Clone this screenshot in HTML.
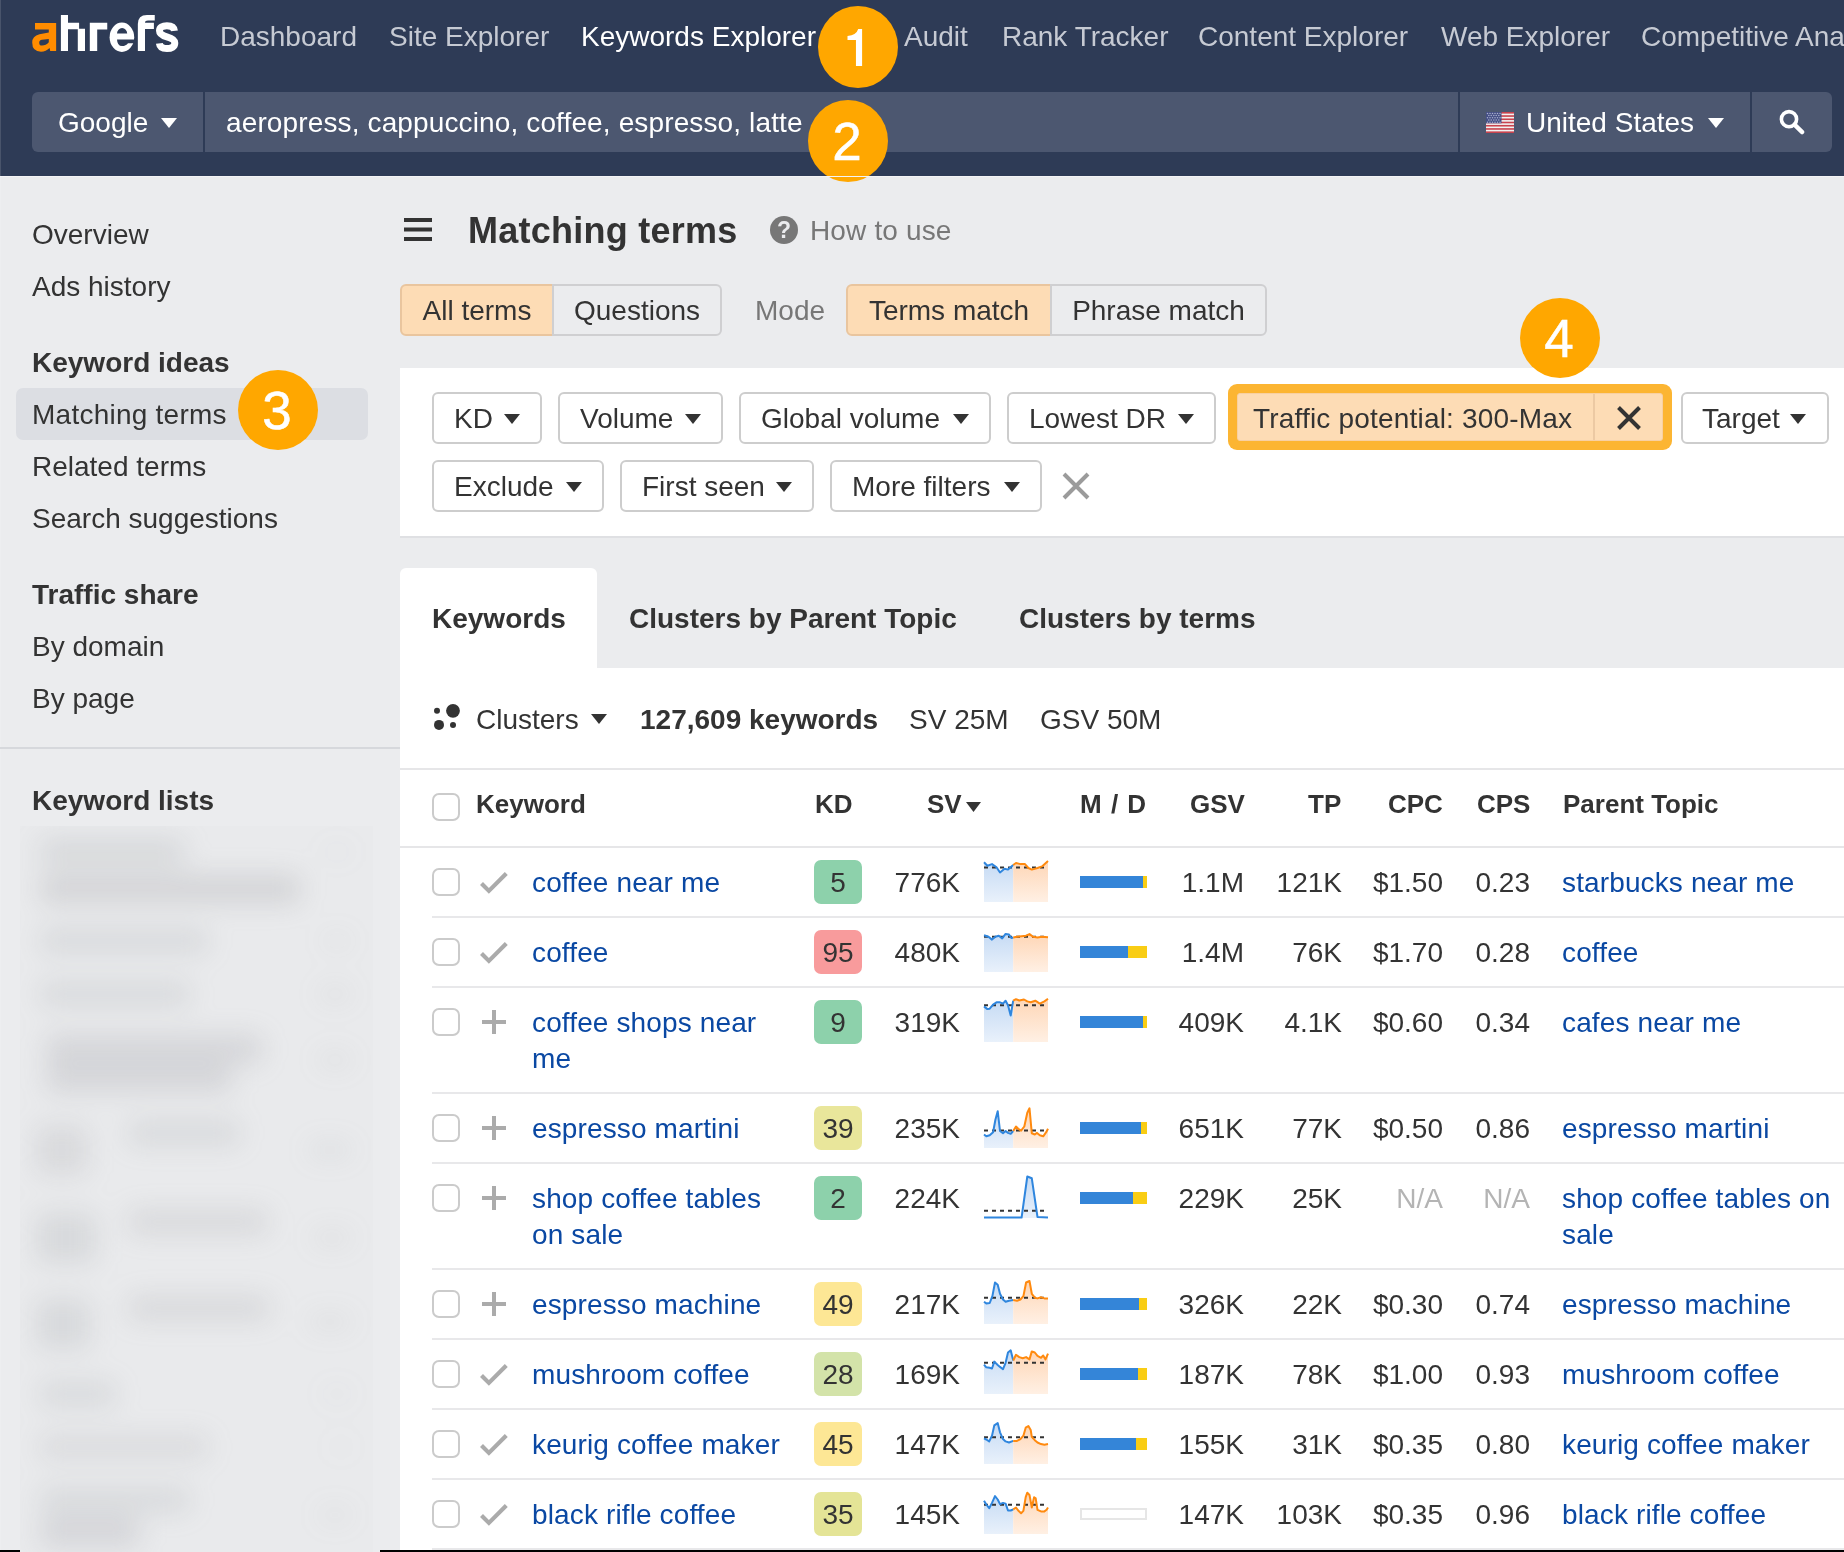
<!DOCTYPE html>
<html><head><meta charset="utf-8"><title>Keywords Explorer</title>
<style>
*{box-sizing:border-box;margin:0;padding:0}
html,body{width:1844px;height:1552px;overflow:hidden}
body{font-family:"Liberation Sans",sans-serif;font-size:28px;color:#333;background:#ebecee;position:relative}
.abs{position:absolute;white-space:nowrap}
#top{position:absolute;left:0;top:0;width:1844px;height:176px;background:#2e3b56}
.nav{position:absolute;top:19px;line-height:36px;color:#c6cad3;font-size:28px;white-space:nowrap}
.nav.on{color:#fff}
#sb{position:absolute;left:32px;top:92px;width:1800px;height:60px;border-radius:6px;background:#4c5770;overflow:hidden}
#sb .dv{position:absolute;top:0;width:2px;height:60px;background:#2e3b56}
#sb span{position:absolute;top:13px;line-height:36px;color:#fff;white-space:nowrap}
.tri{position:absolute;display:block;width:16px;height:10px;background:#fff;clip-path:polygon(0 0,100% 0,50% 100%)}
.tri.dk{background:#333}
.circ{position:absolute;width:80px;height:82px;border-radius:50%;background:#ffa700;color:#fff;font-size:53px;line-height:84px;text-align:center;padding-right:2px;-webkit-text-stroke:0.5px #fff}
.side{position:absolute;left:32px;line-height:36px;white-space:nowrap}
.side.b{font-weight:bold}
.btn{position:absolute;height:52px;line-height:50px;border:2px solid #cfcfd1;background:#ebecee;text-align:center;white-space:nowrap}
.btn.on{background:#fddcb5;border-color:#e9c59e}
.fb{position:absolute;height:52px;border:2px solid #cdcdcd;border-radius:6px;background:#fff;line-height:50px;padding-left:20px;white-space:nowrap}
.fb .tri{top:20px}
#panel{position:absolute;left:400px;top:668px;width:1444px;height:884px;background:#fff}
.th{position:absolute;top:786px;line-height:36px;font-size:26px;font-weight:bold;white-space:nowrap}
.cb{position:absolute;left:32px;top:20px;width:28px;height:28px;border:2px solid #cbcbcb;border-radius:7px;background:#fff}
#rows{position:absolute;left:400px;top:848px;width:1444px}
.row{position:relative;height:70px;margin-left:32px;border-bottom:2px solid #e8e8ea}
.row .cb{left:0}
.row.tall{height:106px}
.row .ic{position:absolute;left:46px;top:19px}
.kw,.pt{position:absolute;top:17px;line-height:36px;color:#0a48a3;white-space:nowrap;letter-spacing:0.13px}
.kw{left:100px}
.pt{left:1130px}
.kd{position:absolute;left:382px;top:12px;width:48px;height:44px;border-radius:7px;text-align:center;line-height:46px}
.num{position:absolute;top:17px;line-height:36px;text-align:right;white-space:nowrap}
.num.na{color:#b4b4b4}
.sv{right:884px}.gsv{right:600px}.tp{right:502px}.cpc{right:401px}.cps{right:314px}
.spark{position:absolute;left:552px;top:12px}
.md{position:absolute;left:648px;top:28px;width:67px;height:12px;display:block}
.md i{display:block;float:left;height:12px;background:#3485d8}
.md b{display:block;float:left;height:12px;background:#f9cd14}
.md.empty{border:2px solid #e6e6e6;background:#fff}
#blur{position:absolute;left:20px;top:826px;width:353px;height:726px;overflow:hidden;background:#e9eaec}
#blur .in{position:absolute;left:0;top:0;width:354px;height:760px;filter:blur(13px)}
#blur i{position:absolute;display:block;background:#8d8f94;border-radius:8px}
#wrap{position:absolute;left:0;top:0;width:1844px;height:1552px;will-change:transform;overflow:hidden}
</style></head><body><div id="wrap">
<svg width="0" height="0" style="position:absolute"><defs>
<linearGradient id="gb" x1="0" y1="0" x2="0" y2="1"><stop offset="0" stop-color="#c6dbf4"/><stop offset="1" stop-color="#e9f1fb"/></linearGradient>
<linearGradient id="go" x1="0" y1="0" x2="0" y2="1"><stop offset="0" stop-color="#fed6b6"/><stop offset="1" stop-color="#fff0e4"/></linearGradient>
</defs></svg>

<div id="top">
<svg class="abs" style="left:28px;top:8px" width="160" height="52" viewBox="28 8 160 52">
 <path fill="#ff8c00" fill-rule="evenodd" d="M56.15 23 H35 V29.4 H48.8 V32.6 L39.5 34.2 Q32.2 36 32.2 42.5 Q32.2 51.7 41 51.7 Q46 51.7 49.6 48 L50.2 51 H56.15 Z M48.8 38.9 L42 39.8 Q39.2 40.3 39.2 42.7 Q39.2 45.6 42 45.6 Q46 45.6 48.8 42.3 Z"/>
 <g fill="#fff">
 <path d="M60.9 14.9 H68 V22.85 H79.1 V28.7 H85 V51 H77.8 V29.2 H68 V51 H60.9 Z"/>
 <path d="M89.8 22.85 H107.25 V29.5 H97.2 V51 H89.8 Z"/>
 <ellipse cx="121.9" cy="37.25" rx="12.3" ry="14.65"/>
 <path fill="#2e3b56" d="M117 33.6 A5.1 5.5 0 0 1 127.2 33.6 Z M117 39.5 H136 V43.3 H128 Q126 46.1 122 46.1 Q117.3 46.1 117 39.5 Z"/>
 <path d="M137.85 51 V24 Q137.85 15 147 15 H154.75 V20.4 H148 Q145 20.4 145 22.8 H153.9 V29.1 H145 V51 Z"/>
 </g>
 <g fill="none" stroke="#fff">
 <path stroke-width="7" d="M174.4 30.9 C174 27 171 25.8 166.9 25.8 C162.5 25.8 159.5 27.5 159.5 30.8 C159.5 34.5 163 35.8 166.9 36.9 C171 38 174.8 39.3 174.8 43 C174.8 47 171.5 48.6 166.9 48.6 C162.5 48.6 159.8 47 159.4 43.4"/>
 </g>
</svg>
<span class="nav" style="left:220px">Dashboard</span>
<span class="nav" style="left:389px">Site Explorer</span>
<span class="nav on" style="left:581px">Keywords Explorer</span>
<span class="nav" style="left:904px">Audit</span>
<span class="nav" style="left:1002px">Rank Tracker</span>
<span class="nav" style="left:1198px">Content Explorer</span>
<span class="nav" style="left:1441px">Web Explorer</span>
<span class="nav" style="left:1641px">Competitive Analysis</span>
<div id="sb">
 <span style="left:26px">Google</span><i class="tri" style="left:129px;top:26px"></i>
 <i class="dv" style="left:171px"></i>
 <span style="left:194px;letter-spacing:0.13px">aeropress, cappuccino, coffee, espresso, latte</span>
 <i class="dv" style="left:1426px"></i>
 <svg class="abs" style="left:1454px;top:20px" width="28" height="21" viewBox="0 0 28 21"><rect width="28" height="21" fill="#f2f2f2"/><g fill="#c9434e"><rect y="0.000" width="28" height="1.615"/><rect y="3.231" width="28" height="1.615"/><rect y="6.462" width="28" height="1.615"/><rect y="9.692" width="28" height="1.615"/><rect y="12.923" width="28" height="1.615"/><rect y="16.154" width="28" height="1.615"/><rect y="19.385" width="28" height="1.615"/></g><rect width="15.5" height="11.3" fill="#454f85"/><g fill="#aab0cf"><circle cx="1.5" cy="1.4" r="0.75"/><circle cx="4.0" cy="1.4" r="0.75"/><circle cx="6.5" cy="1.4" r="0.75"/><circle cx="9.0" cy="1.4" r="0.75"/><circle cx="11.5" cy="1.4" r="0.75"/><circle cx="14.0" cy="1.4" r="0.75"/><circle cx="2.8" cy="3.6" r="0.75"/><circle cx="5.2" cy="3.6" r="0.75"/><circle cx="7.8" cy="3.6" r="0.75"/><circle cx="10.2" cy="3.6" r="0.75"/><circle cx="12.8" cy="3.6" r="0.75"/><circle cx="1.5" cy="5.8" r="0.75"/><circle cx="4.0" cy="5.8" r="0.75"/><circle cx="6.5" cy="5.8" r="0.75"/><circle cx="9.0" cy="5.8" r="0.75"/><circle cx="11.5" cy="5.8" r="0.75"/><circle cx="14.0" cy="5.8" r="0.75"/><circle cx="2.8" cy="8.0" r="0.75"/><circle cx="5.2" cy="8.0" r="0.75"/><circle cx="7.8" cy="8.0" r="0.75"/><circle cx="10.2" cy="8.0" r="0.75"/><circle cx="12.8" cy="8.0" r="0.75"/><circle cx="1.5" cy="10.2" r="0.75"/><circle cx="4.0" cy="10.2" r="0.75"/><circle cx="6.5" cy="10.2" r="0.75"/><circle cx="9.0" cy="10.2" r="0.75"/><circle cx="11.5" cy="10.2" r="0.75"/><circle cx="14.0" cy="10.2" r="0.75"/></g></svg>
 <span style="left:1494px">United States</span><i class="tri" style="left:1676px;top:26px"></i>
 <i class="dv" style="left:1718px"></i>
 <svg class="abs" style="left:1746px;top:16px" width="30" height="30" viewBox="0 0 30 30"><circle cx="11" cy="11.2" r="7.6" fill="none" stroke="#fff" stroke-width="3.6"/><path d="M16.5 16.7 L24.2 24.1" stroke="#fff" stroke-width="4.4" stroke-linecap="round"/></svg>
</div>
</div>
<div class="circ" style="left:818px;top:6px"><svg width="80" height="82" viewBox="0 0 80 82" style="position:absolute;left:0;top:0"><path fill="#fff" d="M44.1 22.95 H40.2 Q38.5 29 29.5 30.1 V34 H37.95 V60 H44.1 Z"/></svg></div>
<div class="circ" style="left:808px;top:100px">2</div>

<div class="abs" style="left:0;top:176px;width:1844px;height:1px;background:#f4f4f6"></div>
<div class="abs" style="left:0;top:0;width:1px;height:1552px;background:rgba(255,255,255,.13)"></div>
<!-- sidebar -->
<span class="side" style="top:217px">Overview</span>
<span class="side" style="top:269px">Ads history</span>
<span class="side b" style="top:345px">Keyword ideas</span>
<div class="abs" style="left:16px;top:388px;width:352px;height:52px;border-radius:7px;background:#dcdee3"></div>
<span class="side" style="top:397px;letter-spacing:0.24px">Matching terms</span>
<span class="side" style="top:449px">Related terms</span>
<span class="side" style="top:501px">Search suggestions</span>
<span class="side b" style="top:577px">Traffic share</span>
<span class="side" style="top:629px">By domain</span>
<span class="side" style="top:681px">By page</span>
<div class="abs" style="left:0;top:747px;width:400px;height:2px;background:#d6d8dc"></div>
<span class="side b" style="top:783px">Keyword lists</span>
<div id="blur"><div class="in"><i style="left:20px;top:13px;width:145px;height:26px;opacity:0.20"></i><i style="left:20px;top:49px;width:260px;height:28px;opacity:0.24"></i><i style="left:302px;top:20px;width:30px;height:12px;opacity:0.05"></i><i style="left:20px;top:103px;width:168px;height:24px;opacity:0.18"></i><i style="left:302px;top:108px;width:30px;height:14px;opacity:0.07"></i><i style="left:20px;top:156px;width:150px;height:24px;opacity:0.18"></i><i style="left:298px;top:160px;width:34px;height:16px;opacity:0.09"></i><i style="left:26px;top:209px;width:216px;height:28px;opacity:0.22"></i><i style="left:26px;top:238px;width:186px;height:28px;opacity:0.22"></i><i style="left:298px;top:226px;width:34px;height:16px;opacity:0.09"></i><i style="left:108px;top:295px;width:112px;height:24px;opacity:0.18"></i><i style="left:16px;top:299px;width:52px;height:50px;opacity:0.17"></i><i style="left:288px;top:316px;width:44px;height:16px;opacity:0.10"></i><i style="left:108px;top:384px;width:140px;height:24px;opacity:0.19"></i><i style="left:16px;top:387px;width:60px;height:50px;opacity:0.18"></i><i style="left:292px;top:404px;width:40px;height:16px;opacity:0.09"></i><i style="left:108px;top:470px;width:142px;height:24px;opacity:0.19"></i><i style="left:16px;top:473px;width:54px;height:50px;opacity:0.18"></i><i style="left:288px;top:488px;width:44px;height:16px;opacity:0.09"></i><i style="left:20px;top:556px;width:76px;height:24px;opacity:0.18"></i><i style="left:302px;top:561px;width:30px;height:14px;opacity:0.05"></i><i style="left:20px;top:609px;width:168px;height:24px;opacity:0.16"></i><i style="left:310px;top:614px;width:22px;height:14px;opacity:0.04"></i><i style="left:20px;top:662px;width:150px;height:24px;opacity:0.18"></i><i style="left:20px;top:691px;width:100px;height:30px;opacity:0.22"></i><i style="left:298px;top:681px;width:34px;height:16px;opacity:0.07"></i></div></div>
<div class="circ" style="left:238px;top:370px;height:80px;line-height:82px">3</div>

<!-- heading -->
<svg class="abs" style="left:404px;top:218px" width="28" height="24" viewBox="0 0 28 24"><path d="M0 2H28M0 11.5H28M0 21H28" stroke="#333" stroke-width="4"/></svg>
<span class="abs" style="left:468px;top:207px;font-size:36px;font-weight:bold;line-height:48px;letter-spacing:0.25px">Matching terms</span>
<svg class="abs" style="left:770px;top:216px" width="28" height="28" viewBox="0 0 28 28"><circle cx="14" cy="14" r="14" fill="#777"/><text x="14" y="22" font-family="Liberation Sans" font-weight="bold" font-size="23" fill="#ebecee" text-anchor="middle">?</text></svg>
<span class="abs" style="left:810px;top:213px;line-height:36px;color:#777;letter-spacing:0.15px">How to use</span>

<div class="btn on" style="left:400px;top:284px;width:154px;border-radius:6px 0 0 6px">All terms</div>
<div class="btn" style="left:552px;top:284px;width:170px;border-radius:0 6px 6px 0">Questions</div>
<span class="abs" style="left:755px;top:293px;line-height:36px;color:#777">Mode</span>
<div class="btn on" style="left:846px;top:284px;width:206px;border-radius:6px 0 0 6px">Terms match</div>
<div class="btn" style="left:1050px;top:284px;width:217px;border-radius:0 6px 6px 0">Phrase match</div>

<!-- filters -->
<div class="abs" style="left:400px;top:368px;width:1444px;height:170px;background:#fff;border-bottom:2px solid #dfe0e3"></div>
<div class="fb" style="left:432px;top:392px;width:110px">KD<i class="tri dk" style="left:70px"></i></div>
<div class="fb" style="left:558px;top:392px;width:165px">Volume<i class="tri dk" style="left:125px"></i></div>
<div class="fb" style="left:739px;top:392px;width:252px">Global volume<i class="tri dk" style="left:212px"></i></div>
<div class="fb" style="left:1007px;top:392px;width:209px">Lowest DR<i class="tri dk" style="left:169px"></i></div>
<div class="abs" style="left:1228px;top:384px;width:444px;height:66px;border-radius:9px;background:#fcb532"></div>
<div class="abs" style="left:1237px;top:393px;width:426px;height:48px;background:#fddcb5;border:1px solid #f8d0a2;border-radius:3px"></div>
<div class="abs" style="left:1593px;top:394px;width:2px;height:46px;background:#ecc9a3"></div>
<span class="abs" style="left:1253px;top:401px;line-height:36px;letter-spacing:0.19px">Traffic potential: 300-Max</span>
<svg class="abs" style="left:1616px;top:405px" width="26" height="26" viewBox="0 0 26 26"><path d="M2.5 2.5L23.5 23.5M23.5 2.5L2.5 23.5" stroke="#333" stroke-width="4"/></svg>
<div class="fb" style="left:1681px;top:392px;width:148px;padding-left:19px">Target<i class="tri dk" style="left:107px"></i></div>
<div class="fb" style="left:432px;top:460px;width:172px">Exclude<i class="tri dk" style="left:132px"></i></div>
<div class="fb" style="left:620px;top:460px;width:194px">First seen<i class="tri dk" style="left:154px"></i></div>
<div class="fb" style="left:830px;top:460px;width:212px">More filters<i class="tri dk" style="left:172px"></i></div>
<svg class="abs" style="left:1062px;top:472px" width="28" height="28" viewBox="0 0 28 28"><path d="M2 2L26 26M26 2L2 26" stroke="#9b9b9b" stroke-width="4"/></svg>
<div class="circ" style="left:1520px;top:298px;height:80px;line-height:82px">4</div>

<!-- tabs -->
<div class="abs" style="left:400px;top:568px;width:197px;height:102px;background:#fff;border-radius:6px 6px 0 0"></div>
<span class="abs" style="left:432px;top:601px;line-height:36px;font-weight:bold">Keywords</span>
<span class="abs" style="left:629px;top:601px;line-height:36px;font-weight:bold">Clusters by Parent Topic</span>
<span class="abs" style="left:1019px;top:601px;line-height:36px;font-weight:bold">Clusters by terms</span>

<div id="panel"></div>
<svg class="abs" style="left:432px;top:703px" width="30" height="30" viewBox="0 0 30 30"><g fill="#333"><circle cx="21" cy="7.8" r="6.9"/><circle cx="5" cy="7.8" r="3"/><circle cx="7" cy="21.9" r="5"/><circle cx="21" cy="21.9" r="3"/></g></svg>
<span class="abs" style="left:476px;top:702px;line-height:36px">Clusters</span><i class="tri dk" style="left:591px;top:714px"></i>
<span class="abs" style="left:640px;top:702px;line-height:36px;font-weight:bold">127,609 keywords</span>
<span class="abs" style="left:909px;top:702px;line-height:36px">SV 25M</span>
<span class="abs" style="left:1040px;top:702px;line-height:36px">GSV 50M</span>
<div class="abs" style="left:400px;top:768px;width:1444px;height:2px;background:#e6e6e8"></div>

<span class="cb" style="left:432px;top:793px"></span>
<span class="th" style="left:476px">Keyword</span>
<span class="th" style="left:815px">KD</span>
<span class="th" style="left:927px">SV</span><i class="tri dk" style="left:966px;top:802px;width:15px;height:10px"></i>
<span class="th" style="left:1080px;word-spacing:2px">M / D</span>
<span class="th" style="left:1190px">GSV</span>
<span class="th" style="left:1308px">TP</span>
<span class="th" style="left:1388px">CPC</span>
<span class="th" style="left:1477px">CPS</span>
<span class="th" style="left:1563px">Parent Topic</span>
<div class="abs" style="left:400px;top:846px;width:1444px;height:2px;background:#e6e6e8"></div>

<div id="rows">
<div class="row"><span class="cb"></span><svg class="ic" width="32" height="30" viewBox="0 0 32 30"><path d="M3.5 16.5 L10.9 23.9 L28.3 6.6" fill="none" stroke="#ababab" stroke-width="4.2"/></svg><div class="kw">coffee near me</div><span class="kd" style="background:#8dd1ab">5</span><span class="num sv">776K</span><svg class="spark" width="64" height="42" viewBox="0 0 64 42" overflow="visible"><polygon fill="url(#gb)" points="0.0,2.3 3.4,5.7 8.0,4.1 12.5,7.3 16.0,12.5 20.5,8.7 24.0,9.6 29.2,5.0 29.2,42 0,42"/><polygon fill="url(#go)" points="29.2,5.0 32.0,3.0 36.4,4.1 41.0,4.1 44.4,8.0 47.8,9.6 53.5,8.0 58.0,6.4 64.0,1.1 64,42 29.2,42"/><line x1="0" y1="7.5" x2="64" y2="7.5" stroke="#333" stroke-width="2" stroke-dasharray="4 4"/><polyline fill="none" stroke="#2f86de" stroke-width="2" stroke-linejoin="round" points="0.0,2.3 3.4,5.7 8.0,4.1 12.5,7.3 16.0,12.5 20.5,8.7 24.0,9.6 29.2,5.0"/><polyline fill="none" stroke="#ff8a0f" stroke-width="2" stroke-linejoin="round" points="29.2,5.0 32.0,3.0 36.4,4.1 41.0,4.1 44.4,8.0 47.8,9.6 53.5,8.0 58.0,6.4 64.0,1.1"/></svg><span class="md"><i style="width:63px"></i><b style="width:4px"></b></span><span class="num gsv">1.1M</span><span class="num tp">121K</span><span class="num cpc">$1.50</span><span class="num cps">0.23</span><div class="pt">starbucks near me</div></div>
<div class="row"><span class="cb"></span><svg class="ic" width="32" height="30" viewBox="0 0 32 30"><path d="M3.5 16.5 L10.9 23.9 L28.3 6.6" fill="none" stroke="#ababab" stroke-width="4.2"/></svg><div class="kw">coffee</div><span class="kd" style="background:#f89b9c">95</span><span class="num sv">480K</span><svg class="spark" width="64" height="42" viewBox="0 0 64 42" overflow="visible"><polygon fill="url(#gb)" points="0.0,5.2 4.5,6.8 8.0,9.6 11.4,6.8 14.8,5.7 18.2,8.4 21.6,3.9 25.0,4.6 27.3,8.0 29.2,7.5 29.2,42 0,42"/><polygon fill="url(#go)" points="29.2,7.5 33.0,6.8 37.6,6.2 42.0,5.7 45.5,4.1 49.0,6.8 53.5,7.5 58.0,6.8 64.0,7.3 64,42 29.2,42"/><line x1="0" y1="6.8" x2="64" y2="6.8" stroke="#333" stroke-width="2" stroke-dasharray="4 4"/><polyline fill="none" stroke="#2f86de" stroke-width="2" stroke-linejoin="round" points="0.0,5.2 4.5,6.8 8.0,9.6 11.4,6.8 14.8,5.7 18.2,8.4 21.6,3.9 25.0,4.6 27.3,8.0 29.2,7.5"/><polyline fill="none" stroke="#ff8a0f" stroke-width="2" stroke-linejoin="round" points="29.2,7.5 33.0,6.8 37.6,6.2 42.0,5.7 45.5,4.1 49.0,6.8 53.5,7.5 58.0,6.8 64.0,7.3"/></svg><span class="md"><i style="width:48px"></i><b style="width:19px"></b></span><span class="num gsv">1.4M</span><span class="num tp">76K</span><span class="num cpc">$1.70</span><span class="num cps">0.28</span><div class="pt">coffee</div></div>
<div class="row tall"><span class="cb"></span><svg class="ic" width="32" height="30" viewBox="0 0 32 30"><path d="M16 3 V27 M4 15 H28" fill="none" stroke="#ababab" stroke-width="4"/></svg><div class="kw">coffee shops near<br>me</div><span class="kd" style="background:#8dd1ab">9</span><span class="num sv">319K</span><svg class="spark" width="64" height="42" viewBox="0 0 64 42" overflow="visible"><polygon fill="url(#gb)" points="0.0,6.4 3.4,9.1 5.7,8.7 9.1,4.6 12.5,2.3 16.0,2.3 19.0,3.6 21.6,0.7 24.0,5.2 26.7,15.5 29.2,0.7 29.2,42 0,42"/><polygon fill="url(#go)" points="29.2,0.7 32.0,-0.8 35.3,0.5 40.0,-0.5 43.3,1.4 46.7,2.3 51.3,0.7 55.8,3.6 60.4,1.4 64.0,-1.2 64,42 29.2,42"/><line x1="0" y1="5.2" x2="64" y2="5.2" stroke="#333" stroke-width="2" stroke-dasharray="4 4"/><polyline fill="none" stroke="#2f86de" stroke-width="2" stroke-linejoin="round" points="0.0,6.4 3.4,9.1 5.7,8.7 9.1,4.6 12.5,2.3 16.0,2.3 19.0,3.6 21.6,0.7 24.0,5.2 26.7,15.5 29.2,0.7"/><polyline fill="none" stroke="#ff8a0f" stroke-width="2" stroke-linejoin="round" points="29.2,0.7 32.0,-0.8 35.3,0.5 40.0,-0.5 43.3,1.4 46.7,2.3 51.3,0.7 55.8,3.6 60.4,1.4 64.0,-1.2"/></svg><span class="md"><i style="width:63px"></i><b style="width:4px"></b></span><span class="num gsv">409K</span><span class="num tp">4.1K</span><span class="num cpc">$0.60</span><span class="num cps">0.34</span><div class="pt">cafes near me</div></div>
<div class="row"><span class="cb"></span><svg class="ic" width="32" height="30" viewBox="0 0 32 30"><path d="M16 3 V27 M4 15 H28" fill="none" stroke="#ababab" stroke-width="4"/></svg><div class="kw">espresso martini</div><span class="kd" style="background:#e9e69b">39</span><span class="num sv">235K</span><svg class="spark" width="64" height="42" viewBox="0 0 64 42" overflow="visible"><polygon fill="url(#gb)" points="0.0,28.5 2.3,30.3 5.7,29.2 9.1,26.2 11.4,13.7 13.7,5.2 16.0,25.0 19.0,27.3 21.6,25.0 24.0,26.9 26.7,27.8 29.2,25.0 29.2,42 0,42"/><polygon fill="url(#go)" points="29.2,25.0 32.0,20.5 34.2,22.8 37.1,24.6 40.3,20.5 43.3,6.8 45.5,2.3 47.8,27.3 50.8,28.5 53.0,26.9 55.8,29.2 59.2,30.3 62.2,26.2 64.0,22.8 64,42 29.2,42"/><line x1="0" y1="24.6" x2="64" y2="24.6" stroke="#333" stroke-width="2" stroke-dasharray="4 4"/><polyline fill="none" stroke="#2f86de" stroke-width="2" stroke-linejoin="round" points="0.0,28.5 2.3,30.3 5.7,29.2 9.1,26.2 11.4,13.7 13.7,5.2 16.0,25.0 19.0,27.3 21.6,25.0 24.0,26.9 26.7,27.8 29.2,25.0"/><polyline fill="none" stroke="#ff8a0f" stroke-width="2" stroke-linejoin="round" points="29.2,25.0 32.0,20.5 34.2,22.8 37.1,24.6 40.3,20.5 43.3,6.8 45.5,2.3 47.8,27.3 50.8,28.5 53.0,26.9 55.8,29.2 59.2,30.3 62.2,26.2 64.0,22.8"/></svg><span class="md"><i style="width:61px"></i><b style="width:6px"></b></span><span class="num gsv">651K</span><span class="num tp">77K</span><span class="num cpc">$0.50</span><span class="num cps">0.86</span><div class="pt">espresso martini</div></div>
<div class="row tall"><span class="cb"></span><svg class="ic" width="32" height="30" viewBox="0 0 32 30"><path d="M16 3 V27 M4 15 H28" fill="none" stroke="#ababab" stroke-width="4"/></svg><div class="kw">shop coffee tables<br>on sale</div><span class="kd" style="background:#8dd1ab">2</span><span class="num sv">224K</span><svg class="spark" width="64" height="42" viewBox="0 0 64 42" overflow="visible"><polygon fill="url(#gb)" points="0.0,41.5 37.6,41.5 43.3,0.5 47.8,2.3 53.5,41.0 64.0,41.5 64,42 0,42"/><line x1="0" y1="34.7" x2="64" y2="34.7" stroke="#333" stroke-width="2" stroke-dasharray="4 4"/><polyline fill="none" stroke="#2f86de" stroke-width="2" stroke-linejoin="round" points="0.0,41.5 37.6,41.5 43.3,0.5 47.8,2.3 53.5,41.0 64.0,41.5"/></svg><span class="md"><i style="width:53px"></i><b style="width:14px"></b></span><span class="num gsv">229K</span><span class="num tp">25K</span><span class="num cpc na">N/A</span><span class="num cps na">N/A</span><div class="pt">shop coffee tables on<br>sale</div></div>
<div class="row"><span class="cb"></span><svg class="ic" width="32" height="30" viewBox="0 0 32 30"><path d="M16 3 V27 M4 15 H28" fill="none" stroke="#ababab" stroke-width="4"/></svg><div class="kw">espresso machine</div><span class="kd" style="background:#fde795">49</span><span class="num sv">217K</span><svg class="spark" width="64" height="42" viewBox="0 0 64 42" overflow="visible"><polygon fill="url(#gb)" points="0.0,19.8 2.3,21.4 5.7,21.0 8.4,14.1 11.0,0.5 13.7,2.7 16.0,11.8 19.0,17.5 21.6,19.8 25.0,18.7 29.2,18.0 29.2,42 0,42"/><polygon fill="url(#go)" points="29.2,18.0 33.0,18.7 36.4,17.5 39.4,14.1 42.1,0.5 45.5,-1.0 47.8,11.8 50.8,15.7 53.5,16.4 57.0,15.3 60.4,16.4 64.0,16.4 64,42 29.2,42"/><line x1="0" y1="15.7" x2="64" y2="15.7" stroke="#333" stroke-width="2" stroke-dasharray="4 4"/><polyline fill="none" stroke="#2f86de" stroke-width="2" stroke-linejoin="round" points="0.0,19.8 2.3,21.4 5.7,21.0 8.4,14.1 11.0,0.5 13.7,2.7 16.0,11.8 19.0,17.5 21.6,19.8 25.0,18.7 29.2,18.0"/><polyline fill="none" stroke="#ff8a0f" stroke-width="2" stroke-linejoin="round" points="29.2,18.0 33.0,18.7 36.4,17.5 39.4,14.1 42.1,0.5 45.5,-1.0 47.8,11.8 50.8,15.7 53.5,16.4 57.0,15.3 60.4,16.4 64.0,16.4"/></svg><span class="md"><i style="width:59px"></i><b style="width:8px"></b></span><span class="num gsv">326K</span><span class="num tp">22K</span><span class="num cpc">$0.30</span><span class="num cps">0.74</span><div class="pt">espresso machine</div></div>
<div class="row"><span class="cb"></span><svg class="ic" width="32" height="30" viewBox="0 0 32 30"><path d="M3.5 16.5 L10.9 23.9 L28.3 6.6" fill="none" stroke="#ababab" stroke-width="4.2"/></svg><div class="kw">mushroom coffee</div><span class="kd" style="background:#d3e3a9">28</span><span class="num sv">169K</span><svg class="spark" width="64" height="42" viewBox="0 0 64 42" overflow="visible"><polygon fill="url(#gb)" points="0.0,12.6 2.3,15.3 5.7,15.8 8.0,16.5 10.3,9.6 13.7,13.0 16.0,14.9 19.0,17.2 21.6,10.8 24.0,0.5 26.7,-1.7 29.2,8.5 29.2,42 0,42"/><polygon fill="url(#go)" points="29.2,8.5 32.0,2.8 35.3,5.1 38.7,6.2 42.1,5.1 45.5,7.4 47.8,-0.6 50.8,0.5 53.5,3.9 57.0,5.8 59.2,3.5 61.5,7.4 64.0,1.7 64,42 29.2,42"/><line x1="0" y1="10.8" x2="64" y2="10.8" stroke="#333" stroke-width="2" stroke-dasharray="4 4"/><polyline fill="none" stroke="#2f86de" stroke-width="2" stroke-linejoin="round" points="0.0,12.6 2.3,15.3 5.7,15.8 8.0,16.5 10.3,9.6 13.7,13.0 16.0,14.9 19.0,17.2 21.6,10.8 24.0,0.5 26.7,-1.7 29.2,8.5"/><polyline fill="none" stroke="#ff8a0f" stroke-width="2" stroke-linejoin="round" points="29.2,8.5 32.0,2.8 35.3,5.1 38.7,6.2 42.1,5.1 45.5,7.4 47.8,-0.6 50.8,0.5 53.5,3.9 57.0,5.8 59.2,3.5 61.5,7.4 64.0,1.7"/></svg><span class="md"><i style="width:58px"></i><b style="width:9px"></b></span><span class="num gsv">187K</span><span class="num tp">78K</span><span class="num cpc">$1.00</span><span class="num cps">0.93</span><div class="pt">mushroom coffee</div></div>
<div class="row"><span class="cb"></span><svg class="ic" width="32" height="30" viewBox="0 0 32 30"><path d="M3.5 16.5 L10.9 23.9 L28.3 6.6" fill="none" stroke="#ababab" stroke-width="4.2"/></svg><div class="kw">keurig coffee maker</div><span class="kd" style="background:#fde795">45</span><span class="num sv">147K</span><svg class="spark" width="64" height="42" viewBox="0 0 64 42" overflow="visible"><polygon fill="url(#gb)" points="0.0,16.4 2.3,17.5 5.2,19.4 8.0,13.7 10.3,3.4 13.7,1.1 16.0,10.3 19.0,17.1 21.6,19.4 25.0,20.5 29.2,18.9 29.2,42 0,42"/><polygon fill="url(#go)" points="29.2,18.9 33.0,18.9 36.4,17.1 39.4,13.7 41.7,5.7 44.4,4.1 46.7,8.0 47.8,14.8 50.8,18.2 53.5,20.5 57.0,22.1 60.4,22.8 64.0,22.1 64,42 29.2,42"/><line x1="0" y1="15.3" x2="64" y2="15.3" stroke="#333" stroke-width="2" stroke-dasharray="4 4"/><polyline fill="none" stroke="#2f86de" stroke-width="2" stroke-linejoin="round" points="0.0,16.4 2.3,17.5 5.2,19.4 8.0,13.7 10.3,3.4 13.7,1.1 16.0,10.3 19.0,17.1 21.6,19.4 25.0,20.5 29.2,18.9"/><polyline fill="none" stroke="#ff8a0f" stroke-width="2" stroke-linejoin="round" points="29.2,18.9 33.0,18.9 36.4,17.1 39.4,13.7 41.7,5.7 44.4,4.1 46.7,8.0 47.8,14.8 50.8,18.2 53.5,20.5 57.0,22.1 60.4,22.8 64.0,22.1"/></svg><span class="md"><i style="width:56px"></i><b style="width:11px"></b></span><span class="num gsv">155K</span><span class="num tp">31K</span><span class="num cpc">$0.35</span><span class="num cps">0.80</span><div class="pt">keurig coffee maker</div></div>
<div class="row"><span class="cb"></span><svg class="ic" width="32" height="30" viewBox="0 0 32 30"><path d="M3.5 16.5 L10.9 23.9 L28.3 6.6" fill="none" stroke="#ababab" stroke-width="4.2"/></svg><div class="kw">black rifle coffee</div><span class="kd" style="background:#e4e496">35</span><span class="num sv">145K</span><svg class="spark" width="64" height="42" viewBox="0 0 64 42" overflow="visible"><polygon fill="url(#gb)" points="0.0,8.7 2.3,12.5 5.2,16.2 8.0,10.9 11.0,4.1 13.7,7.5 16.0,12.1 19.0,10.9 21.6,11.6 24.0,18.5 26.7,18.5 29.2,17.3 29.2,42 0,42"/><polygon fill="url(#go)" points="29.2,17.3 32.0,15.5 34.2,18.5 37.1,21.2 39.4,18.9 41.7,5.2 43.3,0.7 45.5,3.0 47.8,15.5 50.1,5.2 51.7,6.4 53.5,17.8 57.0,19.4 60.4,19.4 62.6,17.8 64.0,15.5 64,42 29.2,42"/><line x1="0" y1="12.8" x2="64" y2="12.8" stroke="#333" stroke-width="2" stroke-dasharray="4 4"/><polyline fill="none" stroke="#2f86de" stroke-width="2" stroke-linejoin="round" points="0.0,8.7 2.3,12.5 5.2,16.2 8.0,10.9 11.0,4.1 13.7,7.5 16.0,12.1 19.0,10.9 21.6,11.6 24.0,18.5 26.7,18.5 29.2,17.3"/><polyline fill="none" stroke="#ff8a0f" stroke-width="2" stroke-linejoin="round" points="29.2,17.3 32.0,15.5 34.2,18.5 37.1,21.2 39.4,18.9 41.7,5.2 43.3,0.7 45.5,3.0 47.8,15.5 50.1,5.2 51.7,6.4 53.5,17.8 57.0,19.4 60.4,19.4 62.6,17.8 64.0,15.5"/></svg><span class="md empty"></span><span class="num gsv">147K</span><span class="num tp">103K</span><span class="num cpc">$0.35</span><span class="num cps">0.96</span><div class="pt">black rifle coffee</div></div>
</div>
<div class="abs" style="left:0;top:1550px;width:20px;height:2px;background:#000"></div>
<div class="abs" style="left:380px;top:1550px;width:1464px;height:2px;background:#000"></div>
</div></body></html>
